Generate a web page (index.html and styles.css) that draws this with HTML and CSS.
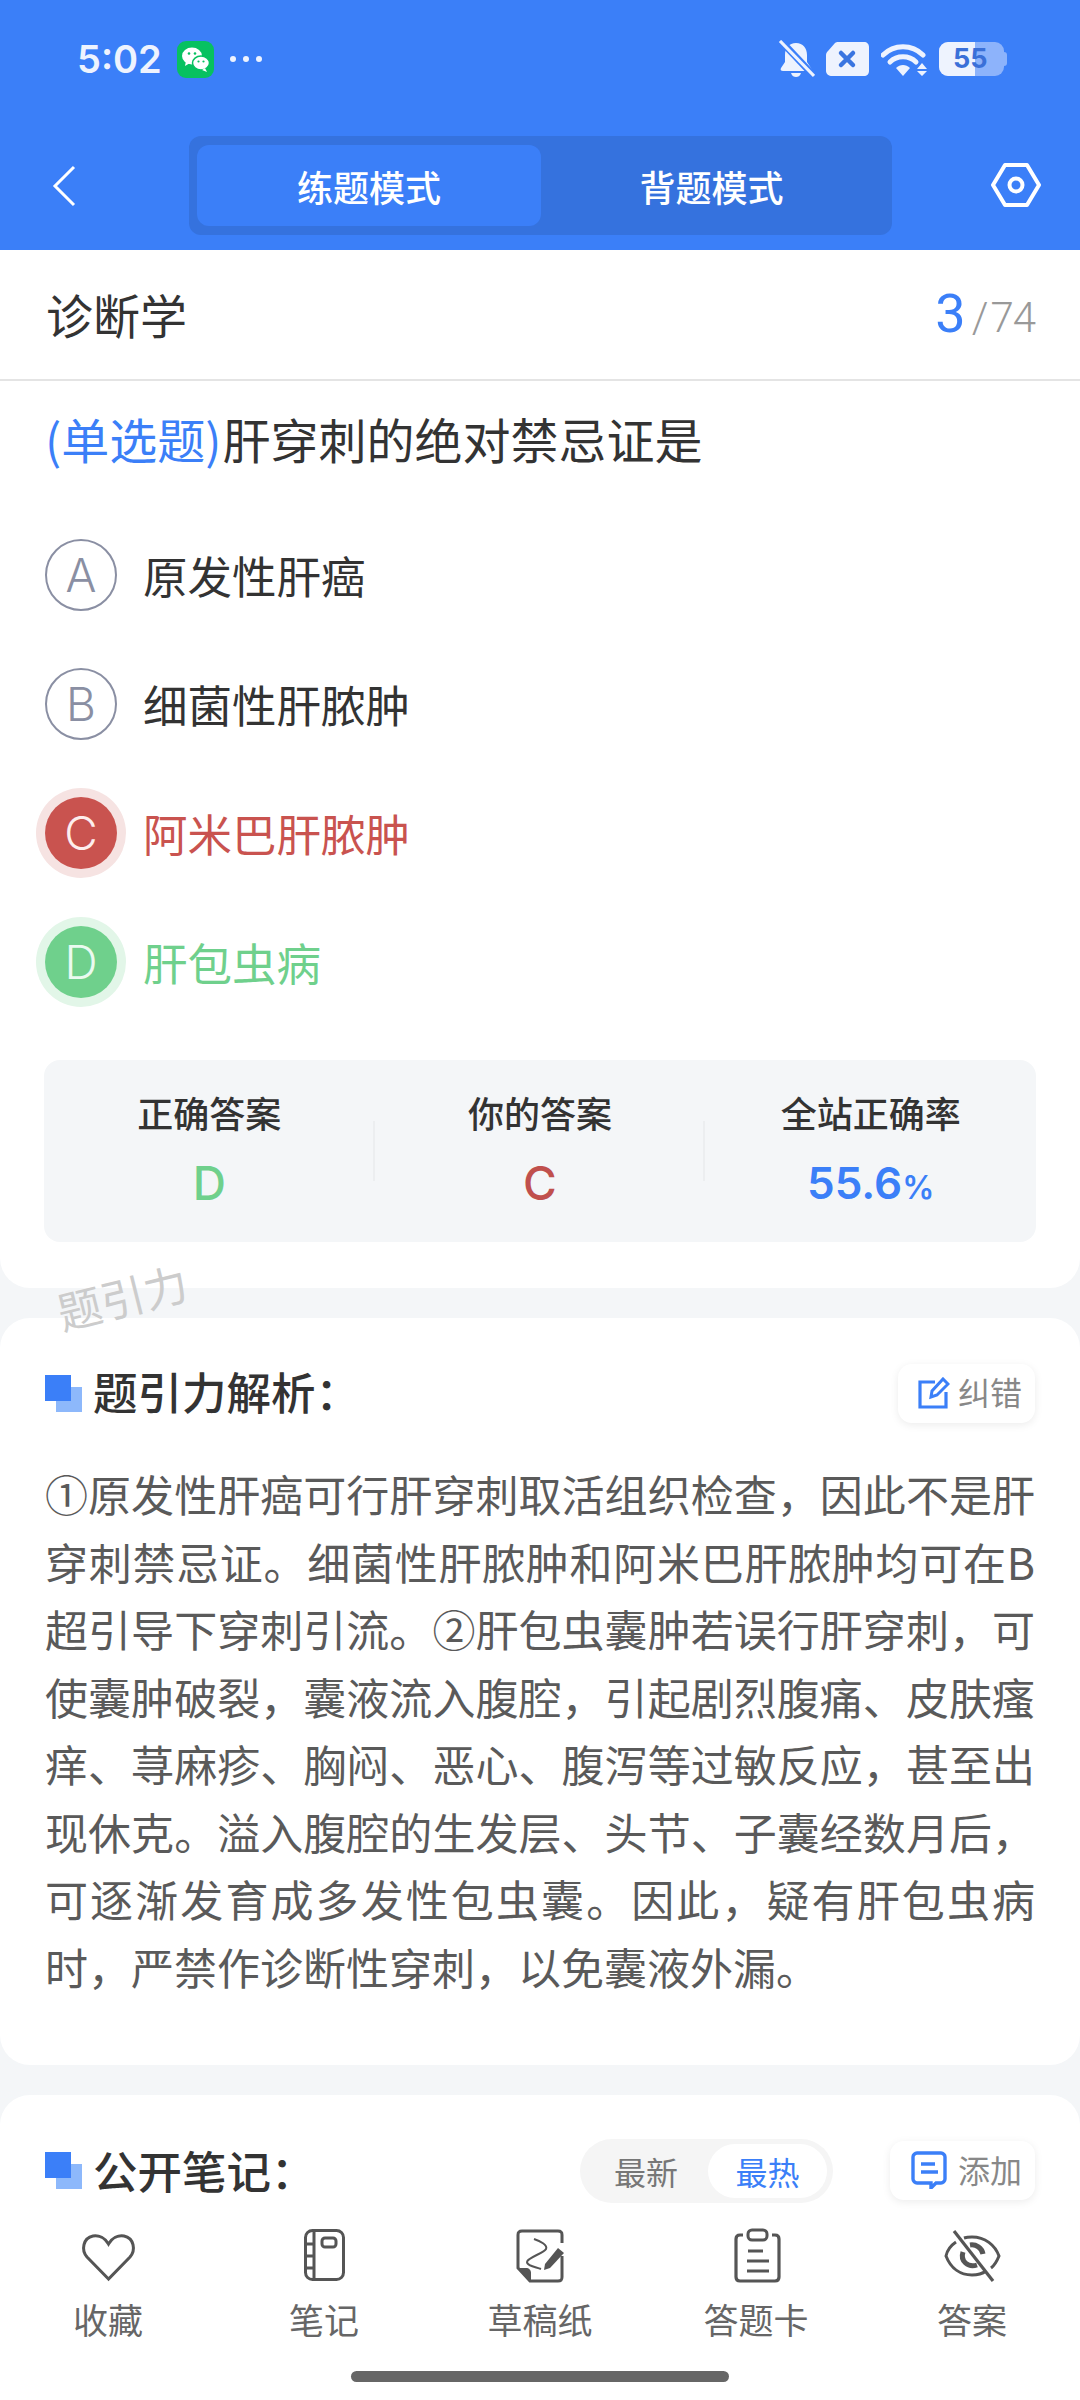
FILE: index.html
```html
<!DOCTYPE html>
<html lang="zh-CN">
<head>
<meta charset="utf-8">
<title>练题模式</title>
<link rel="stylesheet" href="styles.css">
</head>
<body>
<div class="page">
  <header class="header">
    <div class="status">
      <span class="time">5:02</span>
      <svg class="wechat" viewBox="0 0 37 37"><rect width="37" height="37" rx="9" fill="#07c160"/><ellipse cx="15" cy="15" rx="10" ry="8.5" fill="#fff"/><path d="M9 20l-1 5 5-3z" fill="#fff"/><ellipse cx="24" cy="22" rx="8.5" ry="7" fill="#fff" stroke="#07c160" stroke-width="1.5"/><path d="M28 27l2 4-5-2z" fill="#fff"/><circle cx="12" cy="12.500" r="1.300" fill="#07c160"/><circle cx="18" cy="12.500" r="1.300" fill="#07c160"/><circle cx="21.500" cy="20.500" r="1.100" fill="#07c160"/><circle cx="26.500" cy="20.500" r="1.100" fill="#07c160"/></svg>
      <span class="dots"><i></i><i></i><i></i></span>
      <span class="status-fill"></span>
      <svg class="st-bell" viewBox="0 0 37 38"><path d="M18 3c7 0 11 5 11 12v7l4 6c1 2 0 3-2 3H5c-2 0-3-1-2-3l4-6v-7c0-7 4-12 11-12z" fill="#eef3fe"/><path d="M13 33h10c-1 3-3 4-5 4s-4-1-5-4z" fill="#eef3fe"/><path d="M2 0l34 36" stroke="#3b7ffa" stroke-width="7"/><path d="M2 1l34 35" stroke="#eef3fe" stroke-width="3.200"/></svg>
      <svg class="st-x" viewBox="0 0 43 34"><path d="M12 0h26c3 0 5 2 5 5v24c0 3-2 5-5 5H6c-3 0-6-2-6-5V13c0-2 1-3 2-4l7-8c1-1 2-1 3-1z" fill="#eef3fe"/><path d="M15 11l12 12M27 11L15 23" stroke="#3a75e0" stroke-width="4.500" stroke-linecap="round"/></svg>
      <svg class="st-wifi" viewBox="0 0 47 34"><path d="M2 13C13 2 31 2 42 13" fill="none" stroke="#eef3fe" stroke-width="5" stroke-linecap="round"/><path d="M9 20c7-7 19-7 26 0" fill="none" stroke="#eef3fe" stroke-width="5" stroke-linecap="round"/><path d="M15 26c4-4 10-4 14 0l-7 8z" fill="#eef3fe"/><path d="M41 21l5 6H36zM36 29h10l-5 5z" fill="#eef3fe"/></svg>
      <div class="st-batt"><span class="batt-fill"></span><span class="batt-tip"></span><span class="batt-num">55</span></div>
    </div>
    <div class="nav">
      <svg class="nav-back" viewBox="0 0 26 42"><path d="M23 2L4 21l19 19" fill="none" stroke="#fff" stroke-width="3"/></svg>
      <div class="seg">
        <span class="seg-item seg-active">练题模式</span>
        <span class="seg-item seg-other">背题模式</span>
      </div>
      <svg class="nav-gear" viewBox="0 0 50 46"><path d="M14 3h22l12 20-12 20H14L2 23z" fill="none" stroke="#fff" stroke-width="4" stroke-linejoin="round"/><circle cx="25" cy="23" r="6.500" fill="none" stroke="#fff" stroke-width="4"/></svg>
    </div>
  </header>

  <main class="main">
    <section class="card card-q">
      <div class="subject">
        <span class="subject-name">诊断学</span>
        <span class="counter"><b class="counter-now">3</b><span class="counter-sep">/</span><span class="counter-all">74</span></span>
      </div>
      <p class="question"><span class="q-type">(单选题)</span>肝穿刺的绝对禁忌证是</p>
      <ul class="options">
        <li class="option"><span class="opt-mark">A</span><span class="opt-text">原发性肝癌</span></li>
        <li class="option"><span class="opt-mark">B</span><span class="opt-text">细菌性肝脓肿</span></li>
        <li class="option option-wrong"><span class="opt-mark">C</span><span class="opt-text">阿米巴肝脓肿</span></li>
        <li class="option option-right"><span class="opt-mark">D</span><span class="opt-text">肝包虫病</span></li>
      </ul>
      <div class="stats">
        <div class="stat"><span class="stat-label">正确答案</span><span class="stat-value val-right">D</span></div>
        <div class="stat"><span class="stat-label">你的答案</span><span class="stat-value val-wrong">C</span></div>
        <div class="stat"><span class="stat-label">全站正确率</span><span class="stat-value val-rate">55.6<small>%</small></span></div>
      </div>
    </section>

    <section class="card card-a">
      <div class="sec-head">
        <span class="sec-mark"></span>
        <h2 class="sec-title">题引力解析：</h2>
        <span class="sec-btn">
          <svg class="btn-ico" viewBox="0 0 32 32"><path d="M17 5H2v25h26V15" fill="none" stroke="#3b7ff8" stroke-width="3.200"/><path d="M13 20l1-6L25 2l5 5-11 11z" fill="none" stroke="#3b7ff8" stroke-width="3"/></svg>
          <span class="btn-text">纠错</span>
        </span>
      </div>
      <p class="analysis">①原发性肝癌可行肝穿刺取活组织检查，因此不是肝穿刺禁忌证。细菌性肝脓肿和阿米巴肝脓肿均可在B超引导下穿刺引流。②肝包虫囊肿若误行肝穿刺，可使囊肿破裂，囊液流入腹腔，引起剧烈腹痛、皮肤瘙痒、荨麻疹、胸闷、恶心、腹泻等过敏反应，甚至出现休克。溢入腹腔的生发层、头节、子囊经数月后，可逐渐发育成多发性包虫囊。因此，疑有肝包虫病时，严禁作诊断性穿刺，以免囊液外漏。</p>
    </section>

    <section class="card card-n">
      <div class="sec-head">
        <span class="sec-mark"></span>
        <h2 class="sec-title">公开笔记：</h2>
        <div class="toggle"><span class="tog-item">最新</span><span class="tog-item tog-active">最热</span></div>
        <span class="sec-btn btn-add">
          <svg class="btn-ico" viewBox="0 0 36 38"><path d="M6 2h24c2 0 4 2 4 4v22c0 2-2 4-4 4h-5l-5 5v-5H6c-2 0-4-2-4-4V6c0-2 2-4 4-4z" fill="none" stroke="#3b7ff8" stroke-width="3.400"/><path d="M10 13h14M10 21h17" stroke="#3b7ff8" stroke-width="3.400"/></svg>
          <span class="btn-text">添加</span>
        </span>
      </div>
    </section>
  </main>

  <span class="watermark">题引力</span>

  <nav class="tabbar">
    <div class="tab">
      <svg class="tab-ico" viewBox="0 0 60 60"><path d="M30.500 53L9 31C3 24 5 12 15 10c6-1 12 2 15.500 8C34 12 40 9 46 10c10 2 12 14 6 21z" fill="none" stroke="#555" stroke-width="3"/></svg>
      <span class="tab-label">收藏</span>
    </div>
    <div class="tab">
      <svg class="tab-ico" viewBox="0 0 60 60"><rect x="11.500" y="4.500" width="38" height="49" rx="7" fill="none" stroke="#555" stroke-width="3"/><path d="M20 5v48M11 18h9M11 30h9M11 42h9" stroke="#555" stroke-width="3"/><rect x="28" y="12" width="14" height="9" rx="3" fill="none" stroke="#555" stroke-width="3"/></svg>
      <span class="tab-label">笔记</span>
    </div>
    <div class="tab">
      <svg class="tab-ico" viewBox="0 0 60 60"><path d="M52 17V9c0-3-1-4-4-4H12C9 5 8 6 8 9v33l12 13h28c3 0 4-1 4-4V30" fill="none" stroke="#555" stroke-width="3"/><path d="M8 42h8c3 0 5 2 5 5v8z" fill="#555"/><path d="M24 13C30 15 38 19 36 23C34 27 17 32 17 36C17 40 26 41 31 43" fill="none" stroke="#555" stroke-width="2"/><path d="M35 38l13-16 6 5-14 15-6 2z" fill="#555"/></svg>
      <span class="tab-label">草稿纸</span>
    </div>
    <div class="tab">
      <svg class="tab-ico" viewBox="0 0 60 60"><path d="M17 9h-3c-3 0-4 2-4 4v38c0 3 2 4 4 4h35c2 0 4-1 4-4V13c0-2-1-4-4-4h-3" fill="none" stroke="#555" stroke-width="3.200"/><rect x="22" y="4" width="19" height="10" rx="4" fill="none" stroke="#555" stroke-width="3"/><path d="M22 25h15M21 35h22M21 45h22" stroke="#555" stroke-width="3.200"/></svg>
      <span class="tab-label">答题卡</span>
    </div>
    <div class="tab">
      <svg class="tab-ico" viewBox="0 0 60 60"><path d="M14 16C8 20 5 25 4 30c5 13 15 19 26 19 6 0 10-1 14-4M22 12c3-1 5-1 8-1 13 0 23 8 27 19-2 5-4 9-8 12" fill="none" stroke="#555" stroke-width="3"/><path d="M21 26c-3 9 5 16 14 13M28 19c6-1 12 3 13 9" fill="none" stroke="#555" stroke-width="5"/><path d="M12 5l39 50" stroke="#555" stroke-width="3.200"/></svg>
      <span class="tab-label">答案</span>
    </div>
    <span class="home-bar"></span>
  </nav>
</div>
</body>
</html>
```

FILE: styles.css
```css
* { box-sizing: border-box; margin: 0; padding: 0; }
html, body { width: 1080px; height: 2400px; overflow: hidden; }
body { font-family: "Noto Sans CJK SC", "Noto Sans", sans-serif; color: #333; background: #f4f6f8; }
.page { position: relative; width: 1080px; height: 2400px; overflow: hidden; }

.header { height: 250px; background: #3b7ff8; }
.status { display: flex; align-items: center; height: 118px; padding: 0 76px 0 77px; color: #eef3fe; }
.time { font-family: Inter, Roboto, sans-serif; font-size: 38px; font-weight: 600; width: 100px; }
.wechat { width: 37px; height: 37px; }
.dots { display: flex; gap: 7px; margin-left: 16px; }
.dots i { width: 6px; height: 6px; border-radius: 50%; background: #eef3fe; }
.status-fill { flex: 1; }
.st-bell { width: 37px; height: 38px; }
.st-x { width: 43px; height: 34px; margin-left: 11px; }
.st-wifi { width: 47px; height: 34px; margin-left: 12px; }
.st-batt { position: relative; width: 65px; height: 34px; margin-left: 11px; border-radius: 9px; background: #8db3fb; }
.batt-fill { position: absolute; left: 0; top: 0; bottom: 0; width: 36px; background: #eef3fe; border-radius: 9px 0 0 9px; }
.batt-tip { position: absolute; right: -3px; top: 10px; width: 4px; height: 14px; background: #8db3fb; border-radius: 0 3px 3px 0; }
.batt-num { position: absolute; left: 14px; top: 0; font-family: Inter, sans-serif; font-size: 27px; line-height: 34px; font-weight: 700; color: #3a70d8; }

.nav { display: flex; align-items: center; height: 99px; margin-top: 18px; padding-left: 51px; }
.nav-back { width: 26px; height: 42px; }
.seg { display: flex; width: 703px; height: 99px; margin-left: 112px; padding: 9px 8px; background: #3572de; border-radius: 12px; }
.seg-item { flex: none; width: 344px; display: flex; align-items: center; justify-content: center; font-size: 36px; font-weight: 500; color: #fff; border-radius: 12px; }
.seg-other { width: 341px; }
.seg-active { background: #3b7ff8; }
.nav-gear { width: 50px; height: 46px; margin: -2px 0 0 99px; }

.main { display: flex; flex-direction: column; gap: 30px; }
.card { background: #fff; border-radius: 30px; }
.card-q { height: 1038px; border-radius: 0 0 30px 30px; }
.subject { display: flex; align-items: center; justify-content: space-between; height: 131px; padding: 0 45px 2px 46px; border-bottom: 2px solid #e4e4e4; }
.subject-name { font-size: 47px; color: #333; }
.counter { display: flex; align-items: baseline; font-family: Roboto, sans-serif; }
.counter-now { font-size: 54px; font-weight: 400; color: #3b7ff8; }
.counter-sep { font-size: 42px; font-weight: 300; color: #999; margin: 0 2px 0 6px; }
.counter-all { font-size: 42px; color: #999; font-weight: 300; letter-spacing: -1px; }
.question { padding: 21px 44px 0 45px; font-size: 48px; line-height: 72px; color: #333; }
.q-type { color: #3b7ff8; margin-right: 1px; }
.options { display: flex; flex-direction: column; gap: 57px; list-style: none; padding: 65px 0 0 45px; }
.option { display: flex; align-items: center; height: 72px; }
.opt-mark { width: 72px; height: 72px; flex: none; display: flex; align-items: center; justify-content: center; border: 2px solid #8a8fa3; border-radius: 50%; font-family: Inter, Roboto, sans-serif; font-size: 46px; font-weight: 300; color: #8a8fa3; background: #fff; }
.opt-text { margin-left: 26px; margin-top: -2px; font-size: 44.500px; color: #333; }
.option-wrong .opt-mark { border: 0; background: #c9534f; color: #fdeeee; box-shadow: 0 0 0 9px #f6e3e2; }
.option-wrong .opt-text { color: #c9534f; }
.option-right .opt-mark { border: 0; background: #6fd08c; color: #eafaf0; box-shadow: 0 0 0 9px #e2f6e8; }
.option-right .opt-text { color: #6fd08c; }
.stats { display: grid; grid-template-columns: repeat(3, 1fr); height: 182px; margin: 62px 44px 0; background: #f4f6f8; border-radius: 16px; }
.stat { position: relative; display: flex; flex-direction: column; align-items: center; padding-top: 29px; }
.stat + .stat::before { content: ""; position: absolute; left: -2px; top: 61px; width: 2px; height: 60px; background: #eceef0; }
.stat-label { font-size: 36px; line-height: 46px; font-weight: 500; color: #333; }
.stat-value { margin-top: 18px; font-family: Inter, Roboto, sans-serif; font-size: 46px; line-height: 60px; font-weight: 500; }
.stat-value small { font-size: 32px; }
.val-right { color: #6fd08c; }
.val-wrong { color: #c0504d; }
.val-rate { color: #3b7ff8; font-weight: 600; font-size: 44px; }

.card-a { height: 747px; padding-top: 45px; }
.card-n { height: 300px; padding-top: 45px; }
.sec-head { display: flex; align-items: center; height: 60px; padding: 0 45px; }
.sec-mark { position: relative; flex: none; width: 37px; height: 37px; }
.sec-mark::before { content: ""; position: absolute; left: 11px; top: 12px; width: 26px; height: 25px; background: #8db8fb; }
.sec-mark::after { content: ""; position: absolute; left: 0; top: 0; width: 26px; height: 26px; background: #3b7ff8; }
.sec-title { margin: -6px 0 0 11px; flex: 1; font-size: 44.500px; font-weight: 500; color: #333; }
.card-n .sec-title { margin-top: -1px; }
.sec-btn { flex: none; display: flex; align-items: center; height: 59px; padding: 0 13px 0 20px; gap: 8px; border-radius: 14px; background: #fff; box-shadow: 0 2px 8px rgba(0,0,0,.08); font-size: 32px; color: #888; }
.btn-text { margin-top: -5px; }
.btn-ico { width: 32px; height: 32px; }
.btn-add { margin-left: 57px; padding-left: 21px; gap: 11px; }
.btn-add .btn-text { margin-top: -3px; }
.btn-add .btn-ico { width: 36px; height: 38px; }
.analysis { margin-top: 37px; padding: 0 45px; font-size: 43px; line-height: 67.500px; color: #5a5a5a; text-align: justify; }
.toggle { flex: none; display: flex; align-items: center; width: 253px; height: 64px; margin-top: 2px; padding: 0 7px 0 34px; background: #f5f5f5; border-radius: 32px; font-size: 32px; white-space: nowrap; }
.tog-item { flex: none; color: #777; }
.tog-active { width: 119px; height: 54px; margin-left: 30px; display: flex; align-items: center; justify-content: center; color: #3b7ff8; background: #fff; border-radius: 27px; }

.watermark { position: absolute; left: 56px; top: 1266px; font-size: 44px; line-height: 60px; color: #ccc; transform: rotate(-14deg); }

.tabbar { position: absolute; left: 0; right: 0; top: 2212px; height: 188px; display: grid; grid-template-columns: repeat(5, 216px); align-content: start; background: #fff; }
.tab { display: flex; flex-direction: column; align-items: center; padding-top: 14px; }
.tab-ico { width: 60px; height: 60px; }
.tab-label { margin-top: 9px; font-size: 35px; line-height: 48px; color: #666; }
.home-bar { position: absolute; left: 351px; top: 159px; width: 378px; height: 11px; border-radius: 6px; background: #666; }
```
